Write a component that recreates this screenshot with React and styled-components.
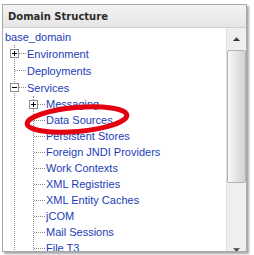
import React from "react";
import styled, { createGlobalStyle } from "styled-components";

const GlobalStyle = createGlobalStyle`
  html, body { margin: 0; padding: 0; background: #ffffff; }
  body { width: 254px; height: 255px; overflow: hidden; }
`;

const Page = styled.div`
  padding: 4px 0 0 2px;
`;

const Panel = styled.section`
  box-sizing: border-box;
  width: 245px;
  height: 248px;
  border: 1px solid #a8a8a8;
  box-shadow: 2px 2px 2px rgba(0, 0, 0, 0.35);
  display: flex;
  flex-direction: column;
  background: #fff;
`;

const Header = styled.header`
  height: 22px;
  flex: 0 0 22px;
  border-bottom: 1px solid #cfcfcf;
  background: linear-gradient(#f2f2f2, #e6e6e6);
  display: flex;
  align-items: center;
  padding-left: 5px;
  font-family: "DejaVu Sans", sans-serif;
  font-weight: bold;
  font-size: 10px;
  color: #2b2b2b;
`;

const Body = styled.div`
  flex: 1;
  display: flex;
  min-height: 0;
`;

const Tree = styled.div`
  position: relative;
  flex: 1;
  overflow: hidden;
  font-family: "Liberation Sans", Arial, sans-serif;
  font-size: 11px;
  color: #1c3cb8;
`;

const Row = styled.div`
  display: flex;
  align-items: center;
  height: ${(p) => p.$h || 16}px;
  white-space: nowrap;
`;

const RootLabel = styled.span`
  padding-left: 2px;
`;

const Branch = styled.div`
  margin-left: ${(p) => p.$indent}px;
  border-left: 1px dotted #8a8a8a;
`;

const Stub = styled.span`
  display: block;
  width: ${(p) => p.$w}px;
  border-top: 1px dotted #8a8a8a;
  flex: 0 0 auto;
`;

const Label = styled.span`
  padding-left: 1px;
`;

const ExpanderBox = styled.svg`
  display: block;
  flex: 0 0 auto;
  margin-left: -5px;
  width: 9px;
  height: 9px;
`;

const Expander = ({ open }) => (
  <ExpanderBox viewBox="0 0 9 9">
    <rect x="0.5" y="0.5" width="8" height="8" fill="#fff" stroke="#8c8c8c" />
    <line x1="2" y1="4.5" x2="7" y2="4.5" stroke="#000" />
    {!open && <line x1="4.5" y1="2" x2="4.5" y2="7" stroke="#000" />}
  </ExpanderBox>
);

const Node = ({ label, expander, h }) => (
  <Row $h={h}>
    {expander ? (
      <>
        <Expander open={expander === "open"} />
        <Stub $w={7} />
      </>
    ) : (
      <Stub $w={11} />
    )}
    <Label>{label}</Label>
  </Row>
);

const Highlight = styled.svg`
  position: absolute;
  left: 0;
  top: 0;
  width: 223px;
  height: 223px;
  pointer-events: none;
`;

const Scrollbar = styled.div`
  width: 19px;
  flex: 0 0 19px;
  border-left: 1px solid #dedede;
  background: #efefef;
  display: flex;
  flex-direction: column;
  overflow: hidden;
`;

const ArrowButton = styled.div`
  flex: 0 0 20px;
  height: 20px;
  display: flex;
  align-items: center;
  justify-content: center;
  margin-top: ${(p) => (p.$down ? "0" : "1px")};
  margin-bottom: ${(p) => (p.$down ? "-9px" : "0")};
`;

const Thumb = styled.div`
  flex: 0 0 133px;
  margin: 1px 0 0 0;
  box-sizing: border-box;
  border: 1px solid #b4b4b4;
  border-radius: 2px;
  background: linear-gradient(to right, #fafafa 0%, #ececec 30%, #dcdcdc 70%, #d2d2d2 100%);
`;

const Spacer = styled.div`
  flex: 1;
`;

const Arrow = ({ down }) => (
  <svg width="7" height="4" viewBox="0 0 7 4">
    <defs>
      <linearGradient id={down ? "ad" : "au"} x1="0" y1="0" x2="0" y2="1">
        <stop offset="0" stopColor="#6a6a6a" />
        <stop offset="1" stopColor="#2a2a2a" />
      </linearGradient>
    </defs>
    {down ? (
      <polygon points="0,0 7,0 3.5,4" fill="url(#ad)" />
    ) : (
      <polygon points="3.5,0 7,4 0,4" fill="url(#au)" />
    )}
  </svg>
);

const services = [
  ["Messaging", "closed"],
  ["Data Sources"],
  ["Persistent Stores"],
  ["Foreign JNDI Providers"],
  ["Work Contexts"],
  ["XML Registries"],
  ["XML Entity Caches"],
  ["jCOM"],
  ["Mail Sessions"],
  ["File T3"],
];

export default function App() {
  return (
    <>
      <GlobalStyle />
      <Page>
        <Panel>
          <Header>Domain Structure</Header>
          <Body>
            <Tree>
              <Row $h={17}>
                <RootLabel>base_domain</RootLabel>
              </Row>
              <Branch $indent={11}>
                <Node label="Environment" expander="closed" h={17} />
                <Node label="Deployments" h={17} />
                <Node label="Services" expander="open" h={17} />
                <Branch $indent={18}>
                  {services.map(([label, exp]) => (
                    <Node key={label} label={label} expander={exp} h={16} />
                  ))}
                </Branch>
              </Branch>
              <Highlight viewBox="0 0 223 223">
                <ellipse
                  cx="74"
                  cy="91.5"
                  rx="50"
                  ry="12"
                  fill="none"
                  stroke="#e3000f"
                  strokeWidth="5"
                  transform="rotate(-5 74 91.5)"
                />
              </Highlight>
            </Tree>
            <Scrollbar>
              <ArrowButton>
                <Arrow />
              </ArrowButton>
              <Thumb />
              <Spacer />
              <ArrowButton $down>
                <Arrow down />
              </ArrowButton>
            </Scrollbar>
          </Body>
        </Panel>
      </Page>
    </>
  );
}
